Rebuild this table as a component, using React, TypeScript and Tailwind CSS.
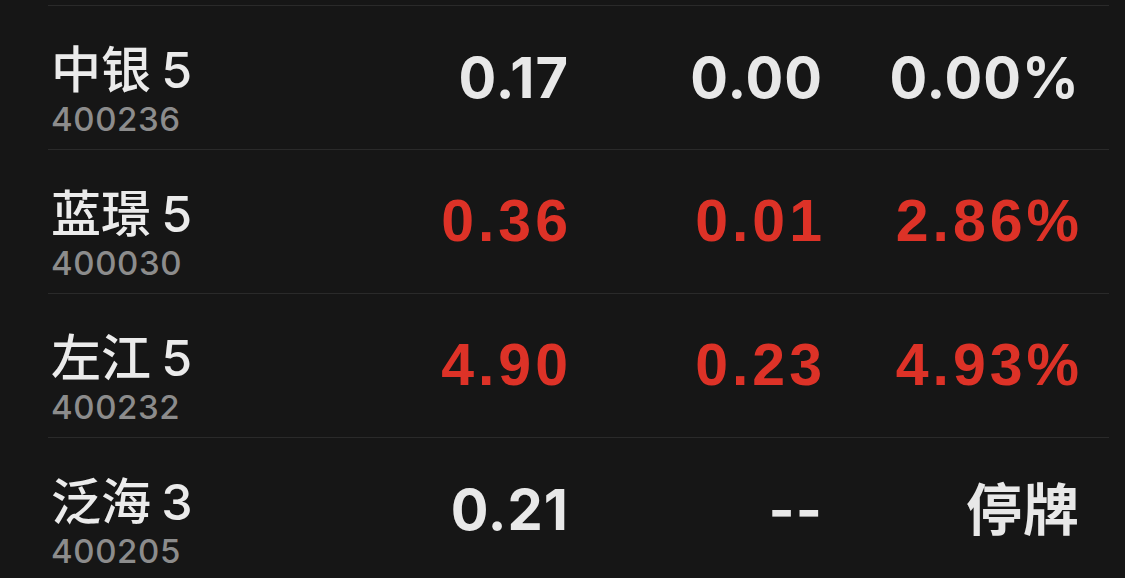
import React from 'react';

type Quote = {
  name: string;
  code: string;
  price: string;
  change: string;
  pct: string;
  up?: boolean;
};

const quotes: Quote[] = [
  { name: '中银 5', code: '400236', price: '0.17', change: '0.00', pct: '0.00%' },
  { name: '蓝璟 5', code: '400030', price: '0.36', change: '0.01', pct: '2.86%', up: true },
  { name: '左江 5', code: '400232', price: '4.90', change: '0.23', pct: '4.93%', up: true },
  { name: '泛海 3', code: '400205', price: '0.21', change: '--', pct: '停牌' }
];

const NumCell = ({ value, up }: { value: string; up?: boolean }) => (
  <div className="flex justify-end">
    {up ? (
      <span className="font-['Liberation_Sans',sans-serif] font-bold text-[59px] leading-none tracking-[4px] -mr-[4px] text-[#dd3227]">
        {value}
      </span>
    ) : (
      <span className="font-['Inter','Noto_Sans_CJK_SC',sans-serif] font-bold text-[56px] leading-none tracking-[1px] -mr-[1px] text-[#e8e8e8]">
        {value}
      </span>
    )}
  </div>
);

const QuoteRow = ({ q }: { q: Quote }) => (
  <div className="grid grid-cols-[1fr_254px_254px_257px] items-center h-[144px] border-t border-[#2a2a2a] pr-[30px]">
    <div className="flex flex-col pl-[3px] pt-[24px]">
      <span className="font-['Inter','Noto_Sans_CJK_SC',sans-serif] font-medium text-[50px] leading-[54px] [word-spacing:-3px] text-[#ebebeb]">
        {q.name}
      </span>
      <span className="mt-[4px] font-['Inter',sans-serif] font-medium text-[33px] leading-[36px] tracking-[0.6px] text-[#8c8c8c]">
        {q.code}
      </span>
    </div>
    <NumCell value={q.price} up={q.up} />
    <NumCell value={q.change} up={q.up} />
    <NumCell value={q.pct} up={q.up} />
  </div>
);

export default function App() {
  return (
    <div className="w-[1125px] h-[578px] overflow-hidden bg-[#161616] pt-[5px] pl-[48px] pr-[16px]">
      {quotes.map((q) => (
        <QuoteRow key={q.code} q={q} />
      ))}
    </div>
  );
}
